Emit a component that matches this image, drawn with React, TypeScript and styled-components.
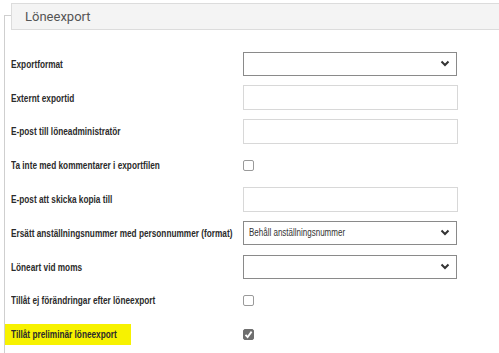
import styled, { createGlobalStyle } from "styled-components";

const GlobalStyle = createGlobalStyle`
  html, body {
    margin: 0;
    padding: 0;
    background: #ffffff;
    overflow: hidden;
  }
  body {
    font-family: "Liberation Sans", Arial, sans-serif;
  }
`;

type Field =
  | { kind: "select"; label: string; value?: string }
  | { kind: "input"; label: string }
  | { kind: "checkbox"; label: string; checked?: boolean; highlight?: boolean };

const fields: Field[] = [
  { kind: "select", label: "Exportformat" },
  { kind: "input", label: "Externt exportid" },
  { kind: "input", label: "E-post till löneadministratör" },
  { kind: "checkbox", label: "Ta inte med kommentarer i exportfilen" },
  { kind: "input", label: "E-post att skicka kopia till" },
  {
    kind: "select",
    label: "Ersätt anställningsnummer med personnummer (format)",
    value: "Behåll anställningsnummer",
  },
  { kind: "select", label: "Löneart vid moms" },
  { kind: "checkbox", label: "Tillåt ej förändringar efter löneexport" },
  { kind: "checkbox", label: "Tillåt preliminär löneexport", checked: true, highlight: true },
];

const Chevron = () => (
  <svg width="10" height="7" viewBox="0 0 10 7">
    <path d="M1.5 1.5 L5 5 L8.5 1.5" fill="none" stroke="#333" strokeWidth="2" />
  </svg>
);

const Check = () => (
  <svg width="9" height="9" viewBox="0 0 9 9">
    <path d="M1.5 4.8 L3.6 7 L7.6 1.6" fill="none" stroke="#fff" strokeWidth="1.8" />
  </svg>
);

export default function App() {
  return (
    <>
      <GlobalStyle />
      <Panel>
        <Legend>Löneexport</Legend>
        <Rows>
          {fields.map((f) => (
            <Row key={f.label}>
              <LabelCell>
                <Label $highlight={f.kind === "checkbox" && !!f.highlight}>
                  <Narrow>{f.label}</Narrow>
                </Label>
              </LabelCell>
              {f.kind === "select" && (
                <Select>
                  <SelectText>{f.value ?? ""}</SelectText>
                  <Chevron />
                </Select>
              )}
              {f.kind === "input" && <Input />}
              {f.kind === "checkbox" && (
                <Box $checked={!!f.checked}>{f.checked && <Check />}</Box>
              )}
            </Row>
          ))}
        </Rows>
      </Panel>
    </>
  );
}

const Panel = styled.div`
  margin: 15px 0 0 4px;
  border-left: 1px solid #cfcfcf;
  border-top: 1px solid #cfcfcf;
  height: 340px;
`;

const Legend = styled.div`
  margin: -13px 0 0 6px;
  height: 25px;
  background: #f4f4f4;
  border: 1px solid #dcdcdc;
  border-right: none;
  display: flex;
  align-items: center;
  padding-left: 13px;
  font-family: Roboto, "Liberation Sans", sans-serif;
  font-size: 13px;
  color: #555;
`;

const Rows = styled.div`
  padding: 17px 0 0 6px;
  display: flex;
  flex-direction: column;
`;

const Row = styled.div`
  height: 33.8px;
  display: grid;
  grid-template-columns: 232px 215px;
  align-items: center;
`;

const LabelCell = styled.div`
  display: flex;
  align-items: center;
  white-space: nowrap;
`;

const Label = styled.span<{ $highlight: boolean }>`
  display: inline-block;
  font-size: 11px;
  font-weight: bold;
  color: #2b2b2b;
  ${(p) =>
    p.$highlight &&
    `
    background: #f7f200;
    margin-left: -6px;
    padding: 4px 0 5px 6px;
    width: 120px;
  `}
`;

const Narrow = styled.span`
  display: inline-block;
  transform: scaleX(0.75);
  transform-origin: left center;
`;

const Select = styled.div`
  width: 214px;
  height: 24px;
  box-sizing: border-box;
  border: 1px solid #8a8a8a;
  display: flex;
  align-items: center;
  justify-content: space-between;
  padding: 0 6px 0 5px;
  font-size: 10px;
  color: #333;
  white-space: nowrap;
`;

const SelectText = styled.span`
  display: inline-block;
  transform: scaleX(0.8);
  transform-origin: left center;
`;

const Input = styled.div`
  width: 215px;
  height: 25px;
  box-sizing: border-box;
  border: 1px solid #d8d8d8;
  background: #fff;
`;

const Box = styled.div<{ $checked: boolean }>`
  width: 11px;
  height: 11px;
  box-sizing: border-box;
  border-radius: 2px;
  border: 1px solid ${(p) => (p.$checked ? "#6f6f6f" : "#9a9a9a")};
  background: ${(p) => (p.$checked ? "#6f6f6f" : "#fff")};
  display: flex;
  align-items: center;
  justify-content: center;
`;
